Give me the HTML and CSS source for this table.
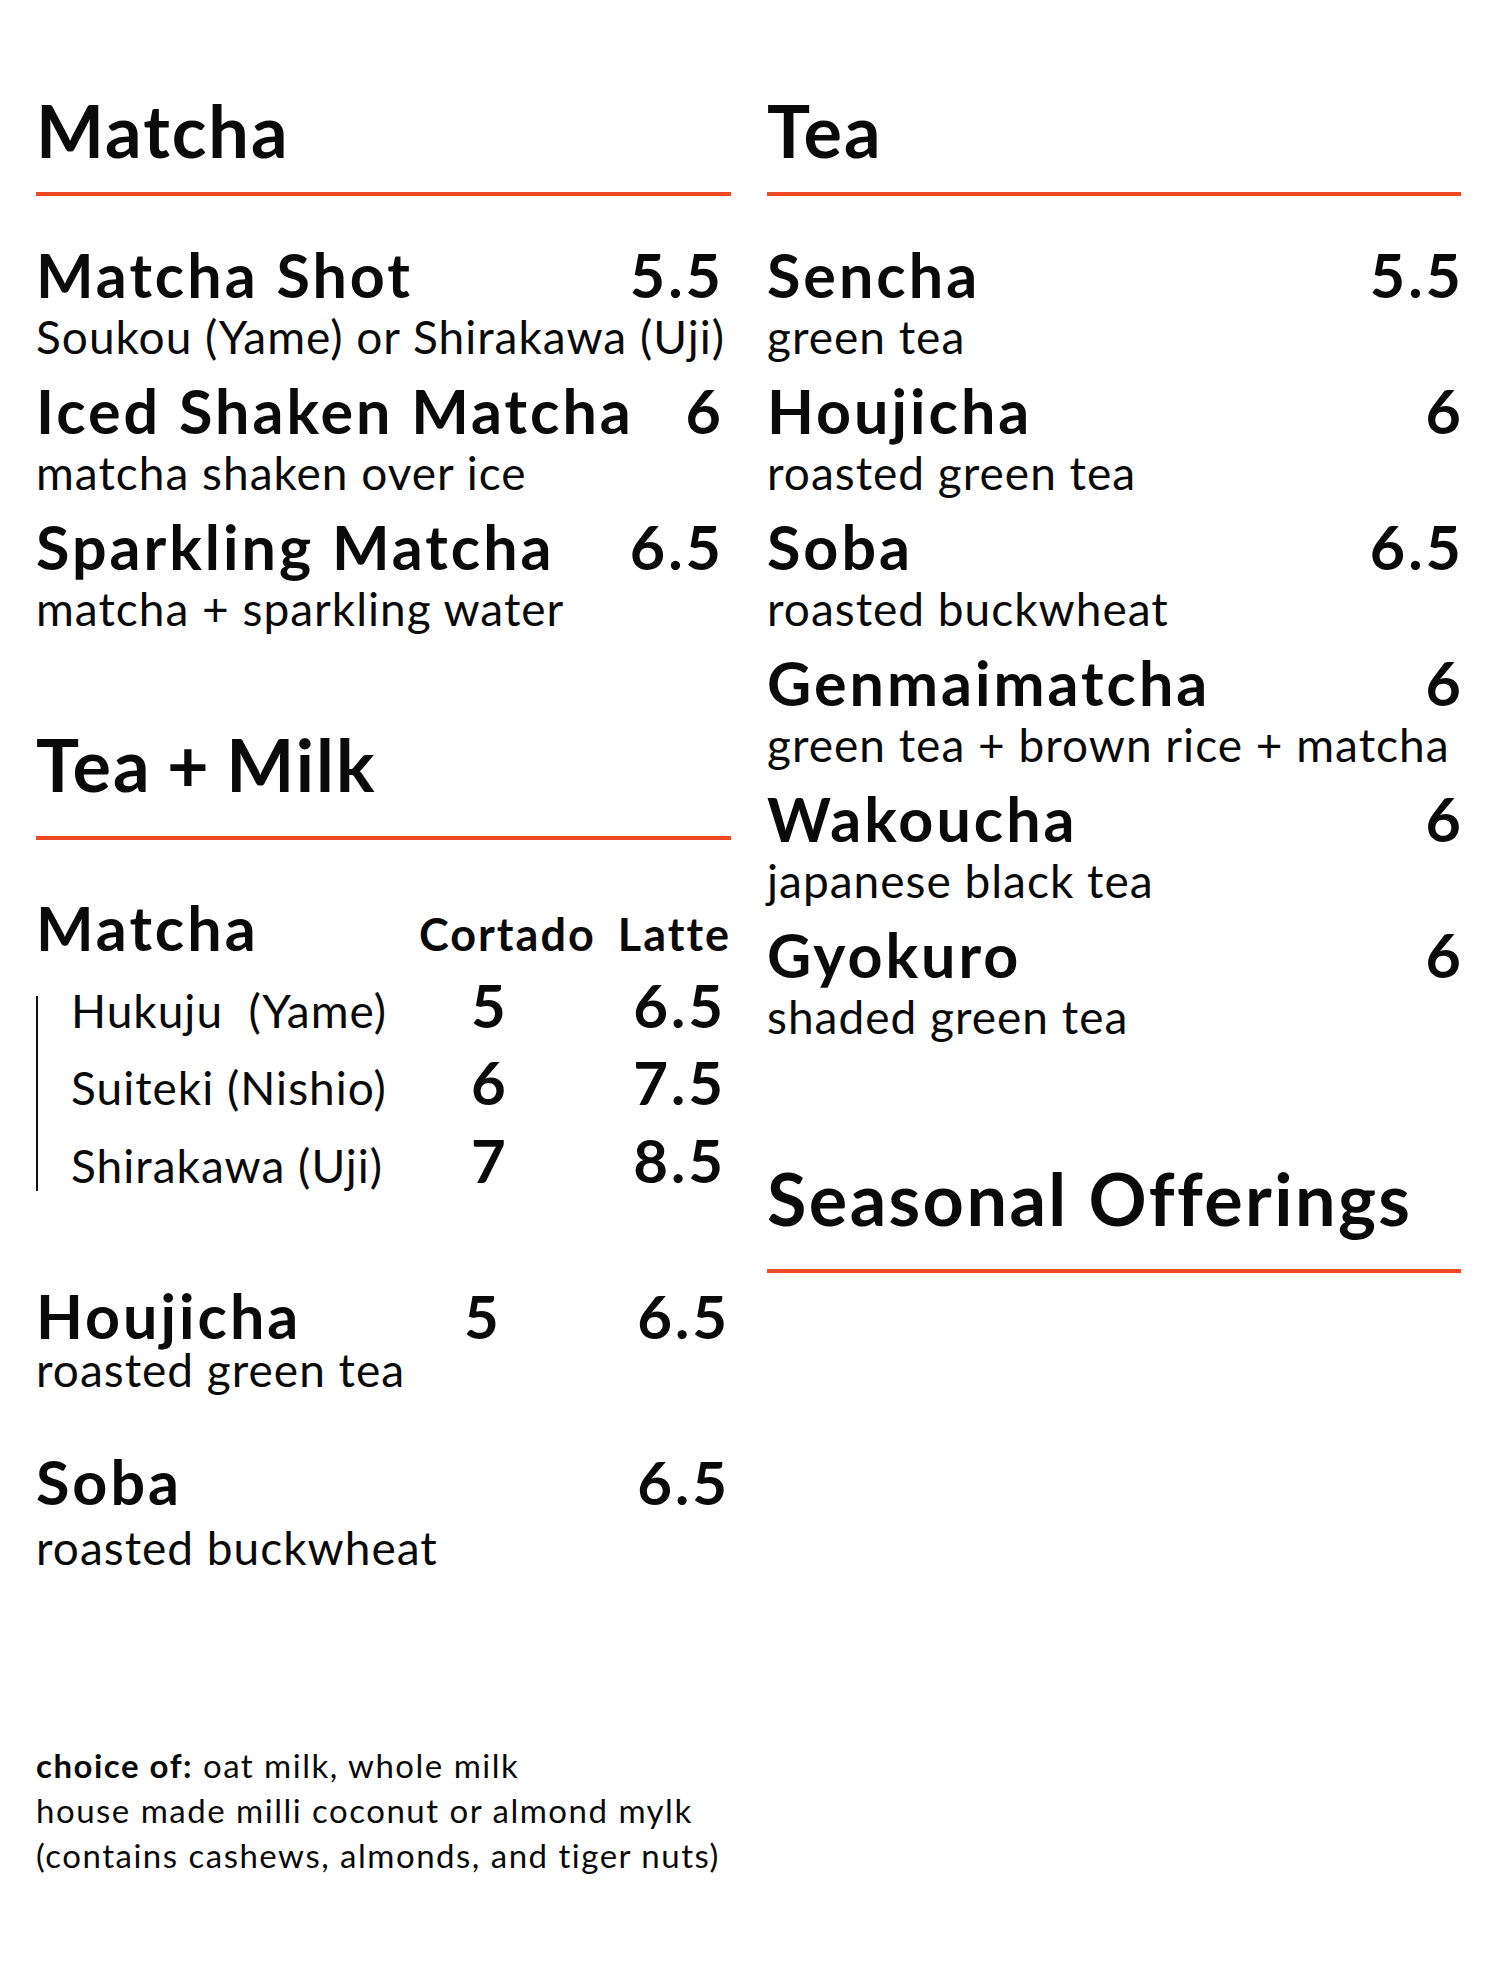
FILE: index.html
```html
<!DOCTYPE html>
<html lang="en">
<head>
<meta charset="utf-8">
<title>Menu</title>
<link rel="stylesheet" href="styles.css">
</head>
<body>
<main class="menu">
  <div class="col col-left">
    <section class="sec">
      <h2 class="heading">Matcha</h2>
      <div class="rule"></div>
      <div class="items items-left">
        <div class="item">
          <div class="item-row"><span class="name">Matcha Shot</span><span class="price">5.5</span></div>
          <div class="desc">Soukou (Yame) or Shirakawa (Uji)</div>
        </div>
        <div class="item">
          <div class="item-row"><span class="name">Iced Shaken Matcha</span><span class="price">6</span></div>
          <div class="desc">matcha shaken over ice</div>
        </div>
        <div class="item">
          <div class="item-row"><span class="name">Sparkling Matcha</span><span class="price">6.5</span></div>
          <div class="desc">matcha + sparkling water</div>
        </div>
      </div>
    </section>

    <section class="sec sec-milk">
      <h2 class="heading heading-milk">Tea + Milk</h2>
      <div class="rule rule-milk"></div>
      <div class="milk-head">
        <span class="c-name name">Matcha</span>
        <span class="c-cort col-label">Cortado</span>
        <span class="c-latte col-label">Latte</span>
      </div>
      <div class="milk-group">
        <div class="milk-row">
          <span class="c-name sub">Hukuju&nbsp; (Yame)</span>
          <span class="c-cort mprice">5</span>
          <span class="c-latte mprice">6.5</span>
        </div>
        <div class="milk-row">
          <span class="c-name sub">Suiteki (Nishio)</span>
          <span class="c-cort mprice">6</span>
          <span class="c-latte mprice">7.5</span>
        </div>
        <div class="milk-row">
          <span class="c-name sub">Shirakawa (Uji)</span>
          <span class="c-cort mprice">7</span>
          <span class="c-latte mprice">8.5</span>
        </div>
      </div>
      <div class="milk-item milk-houjicha">
        <div class="milk-item-row">
          <span class="c-name name">Houjicha</span>
          <span class="c-cort mprice">5</span>
          <span class="c-latte mprice">6.5</span>
        </div>
        <div class="desc milk-desc">roasted green tea</div>
      </div>
      <div class="milk-item milk-soba">
        <div class="milk-item-row">
          <span class="c-name name">Soba</span>
          <span class="c-cort mprice"></span>
          <span class="c-latte mprice">6.5</span>
        </div>
        <div class="desc milk-desc">roasted buckwheat</div>
      </div>
    </section>

    <footer class="note">
      <p><strong>choice of:</strong> oat milk, whole milk</p>
      <p>house made milli coconut or almond mylk</p>
      <p>(contains cashews, almonds, and tiger nuts)</p>
    </footer>
  </div>

  <div class="col col-right">
    <section class="sec">
      <h2 class="heading">Tea</h2>
      <div class="rule"></div>
      <div class="items items-right">
        <div class="item">
          <div class="item-row"><span class="name">Sencha</span><span class="price">5.5</span></div>
          <div class="desc">green tea</div>
        </div>
        <div class="item">
          <div class="item-row"><span class="name">Houjicha</span><span class="price">6</span></div>
          <div class="desc">roasted green tea</div>
        </div>
        <div class="item">
          <div class="item-row"><span class="name">Soba</span><span class="price">6.5</span></div>
          <div class="desc">roasted buckwheat</div>
        </div>
        <div class="item">
          <div class="item-row"><span class="name">Genmaimatcha</span><span class="price">6</span></div>
          <div class="desc">green tea + brown rice + matcha</div>
        </div>
        <div class="item">
          <div class="item-row"><span class="name">Wakoucha</span><span class="price">6</span></div>
          <div class="desc">japanese black tea</div>
        </div>
        <div class="item">
          <div class="item-row"><span class="name">Gyokuro</span><span class="price">6</span></div>
          <div class="desc">shaded green tea</div>
        </div>
      </div>
    </section>

    <section class="sec sec-seasonal">
      <h2 class="heading heading-seasonal">Seasonal Offerings</h2>
      <div class="rule rule-seasonal"></div>
    </section>
  </div>
</main>
</body>
</html>
```

FILE: styles.css
```css
* {
  box-sizing: border-box;
}

html, body {
  margin: 0;
  padding: 0;
  background: #ffffff;
}

body {
  font-family: "Lato", "Liberation Sans", sans-serif;
  color: #0a0a0a;
  width: 1498px;
  min-height: 1987px;
}

.menu {
  display: flex;
  gap: 36px;
  padding: 90px 0 0 36px;
}

.col {
  display: flex;
  flex-direction: column;
}

.col-left {
  width: 695px;
}

.col-right {
  width: 694px;
}

.sec {
  display: flex;
  flex-direction: column;
}

.heading {
  margin: 0;
  font-size: 72px;
  line-height: 80px;
  font-weight: 700;
  letter-spacing: 2px;
  white-space: nowrap;
}

.rule {
  height: 4px;
  background: #ef4a24;
  margin-top: 22px;
}

.items {
  display: flex;
  flex-direction: column;
  gap: 12px;
  margin-top: 46px;
}

.items-left {
  padding-right: 10px;
}

.item-row {
  display: flex;
  justify-content: space-between;
  align-items: baseline;
  line-height: 66px;
  white-space: nowrap;
}

.name {
  font-size: 61px;
  font-weight: 700;
  letter-spacing: 3px;
}

.price {
  font-size: 61px;
  font-weight: 700;
  letter-spacing: 3px;
  margin-right: -3px;
}

.desc {
  font-size: 46px;
  line-height: 58px;
  font-weight: 400;
  letter-spacing: 1px;
  white-space: nowrap;
}

/* Tea + Milk */
.heading-milk {
  margin-top: 86px;
  word-spacing: -4px;
}

.rule-milk {
  margin-top: 32px;
}

.milk-head,
.milk-row,
.milk-item-row {
  display: flex;
  align-items: baseline;
  line-height: 1;
  white-space: nowrap;
}

.milk-head {
  margin-top: 57px;
}

.c-name {
  width: 385px;
}

.c-cort {
  width: 200px;
}

.c-latte {
  flex: 1;
}

.col-label {
  font-size: 45px;
  font-weight: 700;
  letter-spacing: 2px;
}

.milk-group {
  display: flex;
  flex-direction: column;
  gap: 17.5px;
  margin-top: 38px;
  border-left: 2px solid #111;
  padding-bottom: 1.2px;
}

.milk-row:first-child {
  margin-top: -21.2px;
}

.milk-row .c-name {
  width: 383px;
  padding-left: 33px;
}

.sub {
  font-size: 46px;
  font-weight: 400;
  letter-spacing: 1px;
}

.mprice {
  font-size: 60px;
  font-weight: 700;
  letter-spacing: 3px;
}

.milk-row .c-cort {
  padding-left: 50px;
}

.milk-row .c-latte,
.milk-item-row .c-latte {
  text-align: right;
  padding-right: 5px;
}

.milk-item {
  display: flex;
  flex-direction: column;
}

.milk-item-row .c-cort {
  padding-left: 43px;
}

.milk-item-row .c-latte {
  padding-right: 1px;
}

.milk-desc {
  line-height: 42px;
}

.milk-houjicha {
  margin-top: 94px;
}

.milk-houjicha .milk-desc {
  margin-top: 3px;
}

.milk-soba {
  margin-top: 60px;
}

.milk-soba .milk-desc {
  margin-top: 15px;
}

/* Footer note */
.note {
  margin-top: 174px;
  font-size: 33px;
  line-height: 45px;
  letter-spacing: 1.5px;
  white-space: nowrap;
}

.note p {
  margin: 0;
}

.note strong {
  font-weight: 700;
}

/* Seasonal */
.heading-seasonal {
  margin-top: 112px;
  letter-spacing: 2.4px;
}

.rule-seasonal {
  margin-top: 31px;
}
```
